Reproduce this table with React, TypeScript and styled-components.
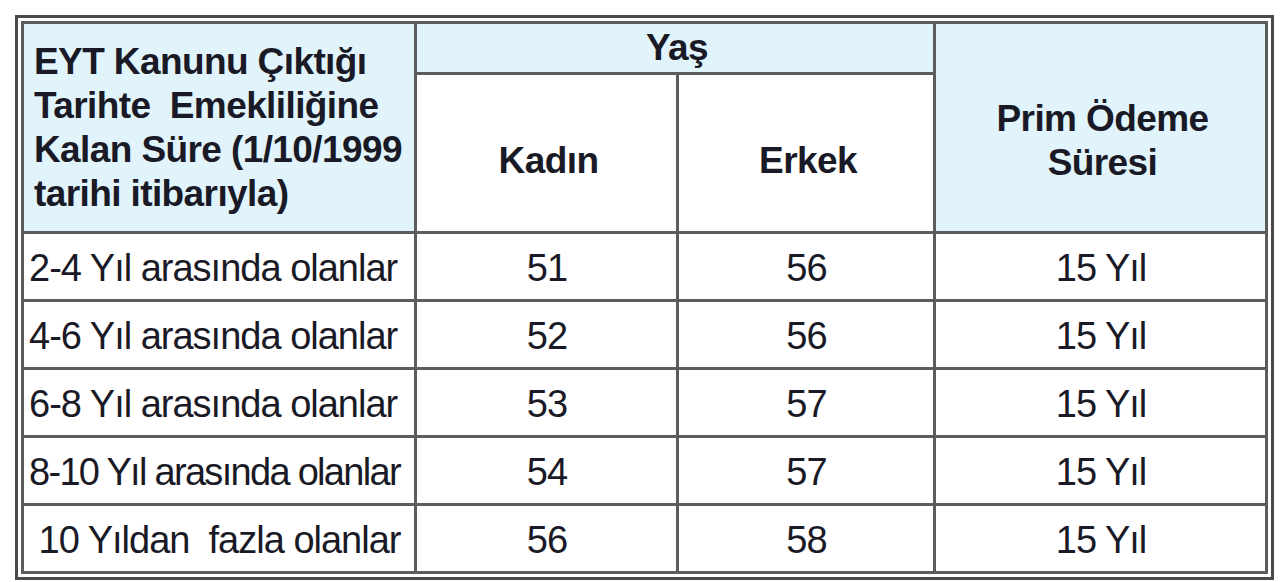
import React from "react";
import styled, { createGlobalStyle } from "styled-components";

const Global = createGlobalStyle`
  html, body { margin: 0; padding: 0; background: #fff; }
  body { font-family: "Liberation Sans", Arial, sans-serif; color: #1a1a26; }
`;

const Page = styled.div`
  padding: 15px 6px 4px 15px;
`;

const Frame = styled.div`
  border: 3px solid #4a4a4a;
  padding: 3px;
  background: #fff;
`;

const Table = styled.table`
  width: 100%;
  border-collapse: collapse;
  table-layout: fixed;
  border: 3px solid #6a6a6a;
`;

const HeadCell = styled.th<{ $blue?: boolean; $align?: string; $h?: number; $top?: number }>`
  border: 3px solid #5c5c5c;
  background: ${(p) => (p.$blue ? "#e1f4fc" : "#fff")};
  font-weight: 700;
  font-size: 37px;
  line-height: 44px;
  letter-spacing: -0.6px;
  text-align: ${(p) => p.$align || "center"};
  vertical-align: middle;
  padding: ${(p) => p.$top || 0}px 6px 0 10px;
  height: ${(p) => (p.$h ? `${p.$h}px` : "auto")};
  white-space: pre;
`;

const Cell = styled.td<{ $align?: string; $tight?: boolean }>`
  border: 3px solid #5c5c5c;
  height: 61px;
  font-size: 38px;
  letter-spacing: ${(p) => (p.$tight ? "-1.7px" : "-1px")};
  text-align: ${(p) => p.$align || "center"};
  vertical-align: middle;
  padding: 4px 4px 0 5px;
  white-space: pre;
`;

const rows: { label: string; kadin: string; erkek: string; prim: string; tight?: boolean }[] = [
  { label: "2-4 Yıl arasında olanlar", kadin: "51", erkek: "56", prim: "15 Yıl" },
  { label: "4-6 Yıl arasında olanlar", kadin: "52", erkek: "56", prim: "15 Yıl" },
  { label: "6-8 Yıl arasında olanlar", kadin: "53", erkek: "57", prim: "15 Yıl" },
  { label: "8-10 Yıl arasında olanlar", kadin: "54", erkek: "57", prim: "15 Yıl", tight: true },
  { label: " 10 Yıldan  fazla olanlar", kadin: "56", erkek: "58", prim: "15 Yıl" },
];

export default function App() {
  return (
    <>
      <Global />
      <Page>
        <Frame>
          <Table>
            <colgroup>
              <col style={{ width: "393px" }} />
              <col style={{ width: "262px" }} />
              <col style={{ width: "257px" }} />
              <col />
            </colgroup>
            <thead>
              <tr>
                <HeadCell $blue $align="left" rowSpan={2}>
                  {"EYT Kanunu Çıktığı\nTarihte  Emekliliğine\nKalan Süre (1/10/1999\ntarihi itibarıyla)"}
                </HeadCell>
                <HeadCell $blue colSpan={2} $h={48}>
                  Yaş
                </HeadCell>
                <HeadCell $blue rowSpan={2} $top={26}>
                  {"Prim Ödeme\nSüresi"}
                </HeadCell>
              </tr>
              <tr>
                <HeadCell $h={140} $top={16}>Kadın</HeadCell>
                <HeadCell $h={140} $top={16}>Erkek</HeadCell>
              </tr>
            </thead>
            <tbody>
              {rows.map((r, i) => (
                <tr key={i}>
                  <Cell $align="left" $tight={r.tight}>{r.label}</Cell>
                  <Cell>{r.kadin}</Cell>
                  <Cell>{r.erkek}</Cell>
                  <Cell>{r.prim}</Cell>
                </tr>
              ))}
            </tbody>
          </Table>
        </Frame>
      </Page>
    </>
  );
}
